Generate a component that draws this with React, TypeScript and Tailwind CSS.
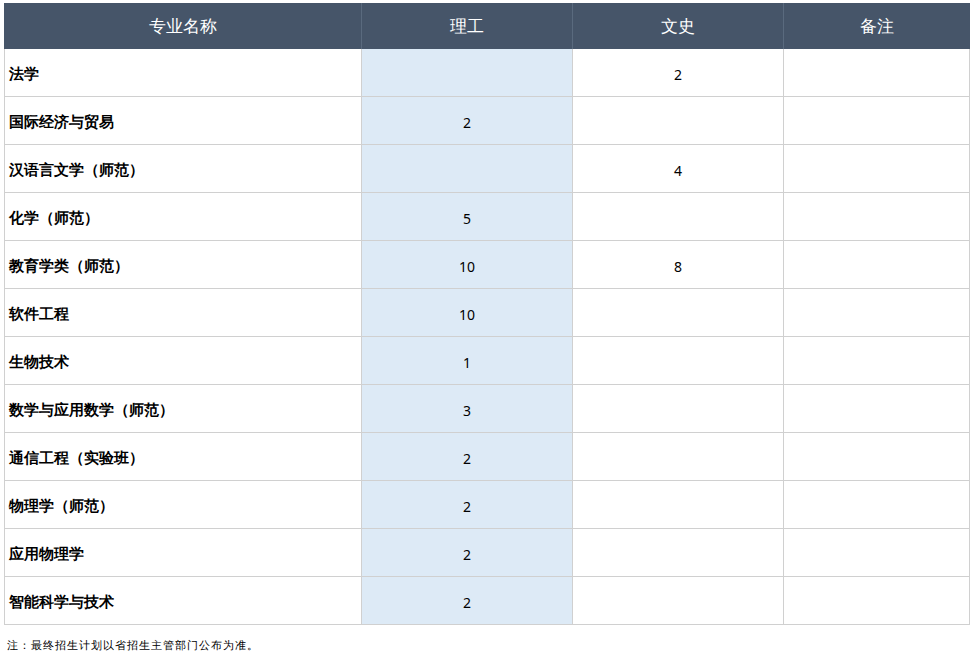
import React from "react";

const rows: [string, string, string][] = [
  ["法学", "", "2"],
  ["国际经济与贸易", "2", ""],
  ["汉语言文学（师范）", "", "4"],
  ["化学（师范）", "5", ""],
  ["教育学类（师范）", "10", "8"],
  ["软件工程", "10", ""],
  ["生物技术", "1", ""],
  ["数学与应用数学（师范）", "3", ""],
  ["通信工程（实验班）", "2", ""],
  ["物理学（师范）", "2", ""],
  ["应用物理学", "2", ""],
  ["智能科学与技术", "2", ""],
];

export default function App() {
  return (
    <div className="w-[974px] h-[665px] bg-white pt-[3px] pl-[4px] font-['Noto_Sans_CJK_SC',sans-serif]">
      <div className="grid grid-cols-[357px_211px_211px_187px] w-[966px]">
        <div className="h-[46px] bg-[#465569] text-white text-[17px] flex items-center justify-center">专业名称</div>
        <div className="h-[46px] bg-[#465569] text-white text-[17px] flex items-center justify-center border-l border-[#5a6a7e]">理工</div>
        <div className="h-[46px] bg-[#465569] text-white text-[17px] flex items-center justify-center border-l border-[#5a6a7e]">文史</div>
        <div className="h-[46px] bg-[#465569] text-white text-[17px] flex items-center justify-center border-l border-[#5a6a7e]">备注</div>
        {rows.map(([n, a, b], r) => (
          <React.Fragment key={r}>
            <div className="h-[48px] border-l border-b border-[#d0d0d0] flex items-center pl-[4px] pt-[3px] text-[14.5px] font-bold text-black">{n}</div>
            <div className="h-[48px] border-l border-b border-[#d0d0d0] bg-[#ddeaf6] flex items-center justify-center pt-[3px] text-[14px] text-black font-['Liberation_Serif',serif]">{a}</div>
            <div className="h-[48px] border-l border-b border-[#d0d0d0] flex items-center justify-center pt-[3px] text-[14px] text-black font-['Liberation_Serif',serif]">{b}</div>
            <div className="h-[48px] border-l border-r border-b border-[#d0d0d0]"></div>
          </React.Fragment>
        ))}
      </div>
      <div className="mt-[12px] pl-[3px] text-[11px] text-black tracking-[1px]">注：最终招生计划以省招生主管部门公布为准。</div>
    </div>
  );
}
